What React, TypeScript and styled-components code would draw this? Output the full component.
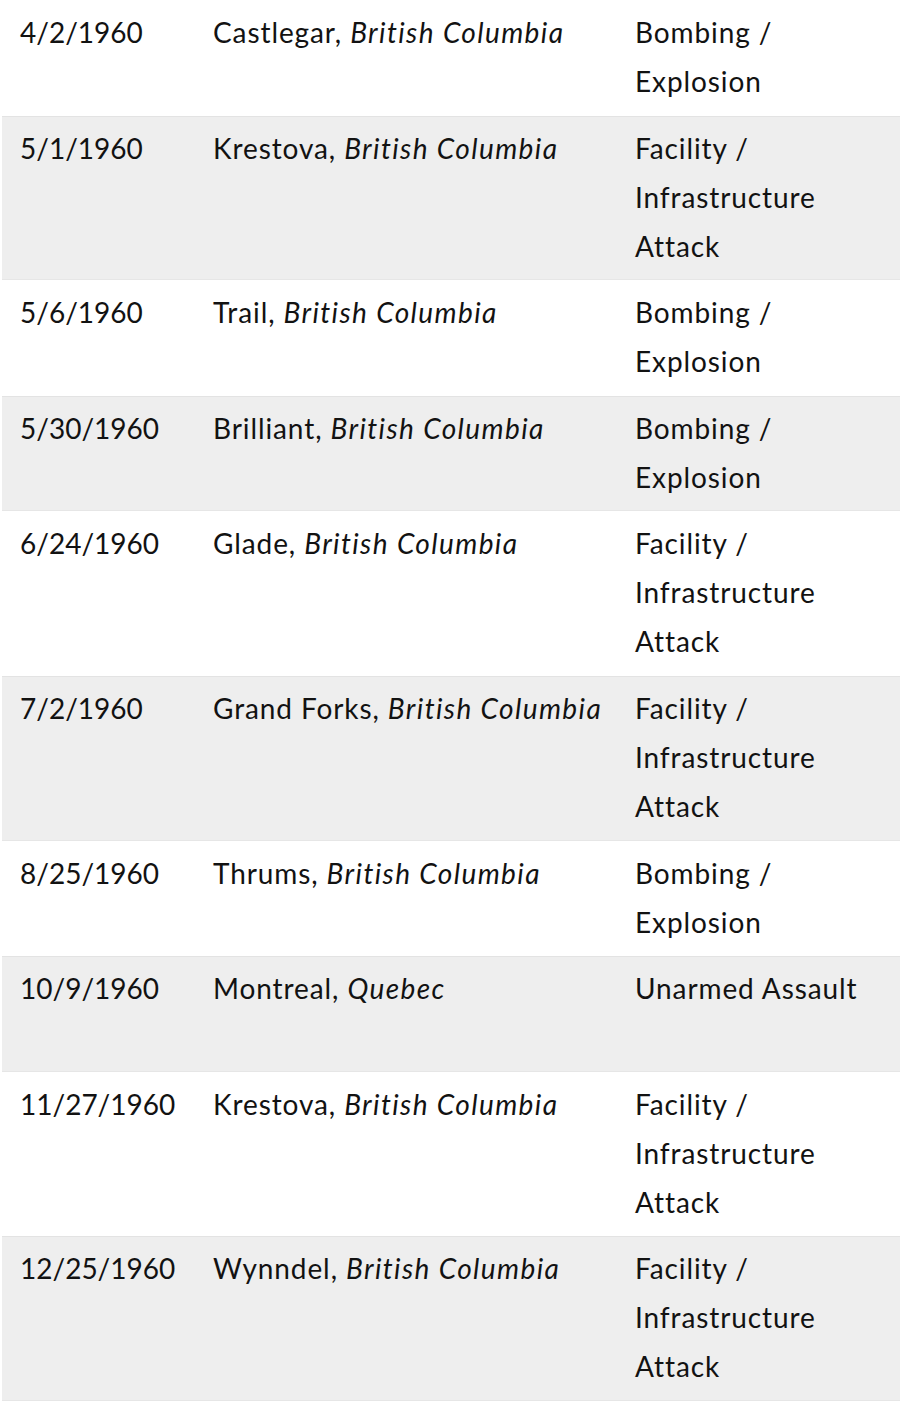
import React from 'react';
import styled, { createGlobalStyle } from 'styled-components';

type Incident = {
  date: string;
  city: string;
  province: string;
  type: string[];
};

const incidents: Incident[] = [
  { date: '4/2/1960', city: 'Castlegar', province: 'British Columbia', type: ['Bombing /', 'Explosion'] },
  { date: '5/1/1960', city: 'Krestova', province: 'British Columbia', type: ['Facility /', 'Infrastructure', 'Attack'] },
  { date: '5/6/1960', city: 'Trail', province: 'British Columbia', type: ['Bombing /', 'Explosion'] },
  { date: '5/30/1960', city: 'Brilliant', province: 'British Columbia', type: ['Bombing /', 'Explosion'] },
  { date: '6/24/1960', city: 'Glade', province: 'British Columbia', type: ['Facility /', 'Infrastructure', 'Attack'] },
  { date: '7/2/1960', city: 'Grand Forks', province: 'British Columbia', type: ['Facility /', 'Infrastructure', 'Attack'] },
  { date: '8/25/1960', city: 'Thrums', province: 'British Columbia', type: ['Bombing /', 'Explosion'] },
  { date: '10/9/1960', city: 'Montreal', province: 'Quebec', type: ['Unarmed Assault'] },
  { date: '11/27/1960', city: 'Krestova', province: 'British Columbia', type: ['Facility /', 'Infrastructure', 'Attack'] },
  { date: '12/25/1960', city: 'Wynndel', province: 'British Columbia', type: ['Facility /', 'Infrastructure', 'Attack'] },
];

const GlobalStyle = createGlobalStyle`
  html, body {
    margin: 0;
    padding: 0;
    background: #ffffff;
  }
  body {
    font-family: Lato, 'Liberation Sans', sans-serif;
    color: #121212;
  }
`;

const Table = styled.div`
  margin-left: 2px;
  width: 898px;
`;

const Row = styled.div<{ $shaded: boolean }>`
  display: grid;
  grid-template-columns: 193px 422px 1fr;
  min-height: 98px;
  padding: 8px 0 9.6px;
  background: ${(p) => (p.$shaded ? '#eeeeee' : '#ffffff')};
  box-shadow: ${(p) => (p.$shaded ? 'inset 0 1px 0 #e3e3e3, inset 0 -1px 0 #e6e6e6' : 'none')};
  font-size: 28px;
  line-height: 49px;
`;

const Cell = styled.div<{ $padRight?: number }>`
  padding-left: 18px;
  padding-right: ${(p) => p.$padRight ?? 18}px;
  white-space: nowrap;
`;

const TextCell = styled(Cell)`
  font-variant-ligatures: none;
  letter-spacing: 0.9px;
`;

const TypeCell = styled(TextCell)`
  white-space: normal;
`;

const Province = styled.em`
  font-style: italic;
  letter-spacing: 1.4px;
`;

const TypeLine = styled.div``;

export default function App() {
  return (
    <>
      <GlobalStyle />
      <Table>
        {incidents.map((item, i) => (
          <Row key={item.date} $shaded={i % 2 === 1}>
            <Cell>{item.date}</Cell>
            <TextCell $padRight={0}>
              {item.city}, <Province>{item.province}</Province>
            </TextCell>
            <TypeCell>
              {item.type.map((line) => (
                <TypeLine key={line}>{line}</TypeLine>
              ))}
            </TypeCell>
          </Row>
        ))}
      </Table>
    </>
  );
}
